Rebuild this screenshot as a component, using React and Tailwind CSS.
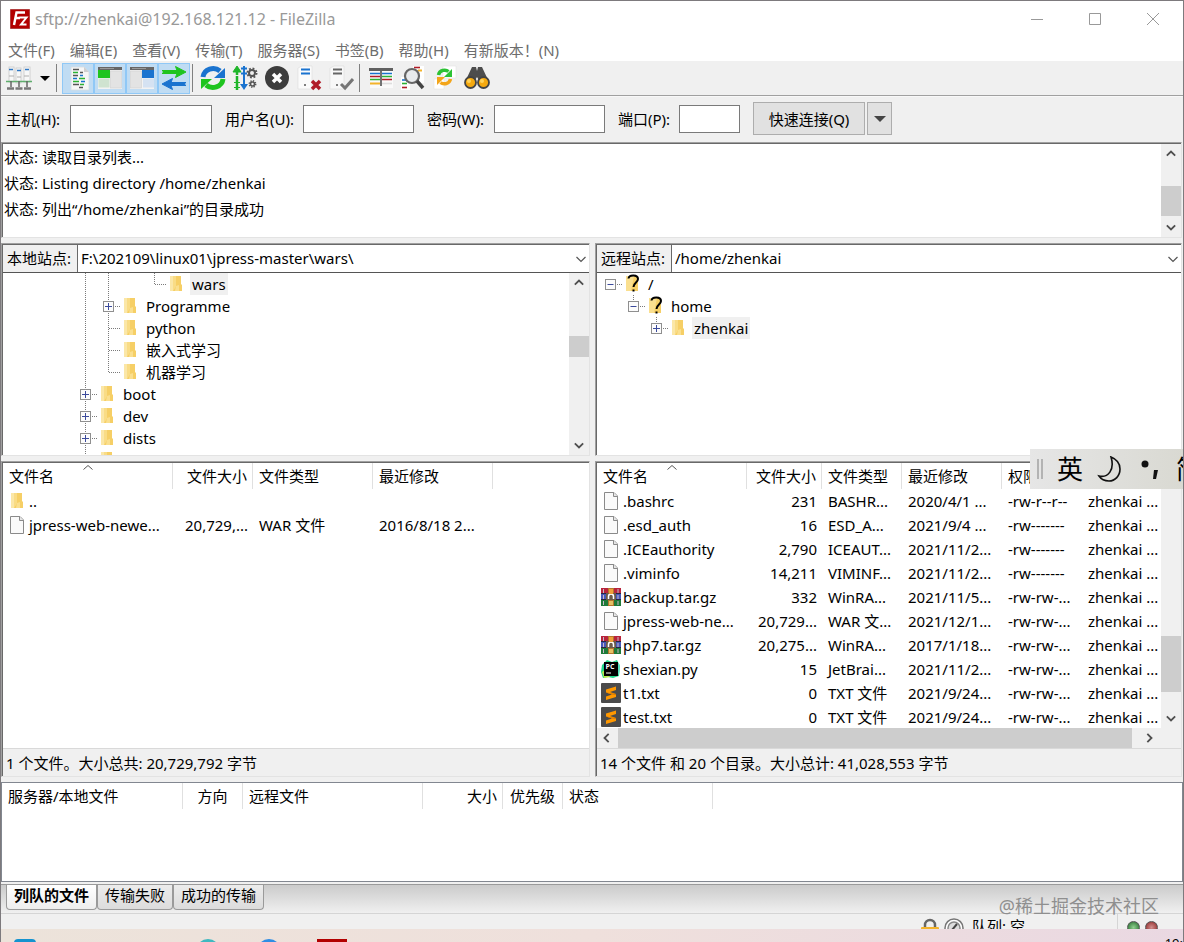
import React, { useState } from 'react';
import clsx from 'clsx';

const MENUS = ['文件(F)', '编辑(E)', '查看(V)', '传输(T)', '服务器(S)', '书签(B)', '帮助(H)', '有新版本！(N)'];

const LOG = ['读取目录列表...', 'Listing directory /home/zhenkai', '列出“/home/zhenkai”的目录成功'];

// guides: one entry per tree level, drawn left to right
const LOCAL_TREE = [
  { name: 'wars', guides: ['line', 'line', 'none', 'end'], selected: true },
  { name: 'Programme', guides: ['line', 'plus'] },
  { name: 'python', guides: ['line', 'branch'] },
  { name: '嵌入式学习', guides: ['line', 'branch'] },
  { name: '机器学习', guides: ['line', 'end'] },
  { name: 'boot', guides: ['plus'] },
  { name: 'dev', guides: ['plus'] },
  { name: 'dists', guides: ['plus'] },
  { name: '', guides: ['line'] },
];

const REMOTE_TREE = [
  { name: '/', guides: ['root'], unknown: true },
  { name: 'home', guides: ['none', 'minus'], unknown: true },
  { name: 'zhenkai', guides: ['none', 'none', 'plusEnd'], selected: true },
];

const LOCAL_FILES = [
  { icon: 'folder', name: '..', size: '', type: '', date: '' },
  { icon: 'file', name: 'jpress-web-newe...', size: '20,729,...', type: 'WAR 文件', date: '2016/8/18 2...' },
];

const REMOTE_FILES = [
  { icon: 'file', name: '.bashrc', size: '231', type: 'BASHR...', date: '2020/4/1 ...', perm: '-rw-r--r--' },
  { icon: 'file', name: '.esd_auth', size: '16', type: 'ESD_A...', date: '2021/9/4 ...', perm: '-rw-------' },
  { icon: 'file', name: '.ICEauthority', size: '2,790', type: 'ICEAUT...', date: '2021/11/2...', perm: '-rw-------' },
  { icon: 'file', name: '.viminfo', size: '14,211', type: 'VIMINF...', date: '2021/11/2...', perm: '-rw-------' },
  { icon: 'rar', name: 'backup.tar.gz', size: '332', type: 'WinRA...', date: '2021/11/5...', perm: '-rw-rw-...' },
  { icon: 'file', name: 'jpress-web-ne...', size: '20,729...', type: 'WAR 文...', date: '2021/12/1...', perm: '-rw-rw-...' },
  { icon: 'rar', name: 'php7.tar.gz', size: '20,275...', type: 'WinRA...', date: '2017/1/18...', perm: '-rw-rw-...' },
  { icon: 'pycharm', name: 'shexian.py', size: '15', type: 'JetBrai...', date: '2021/11/2...', perm: '-rw-rw-...' },
  { icon: 'sublime', name: 't1.txt', size: '0', type: 'TXT 文件', date: '2021/9/24...', perm: '-rw-rw-...' },
  { icon: 'sublime', name: 'test.txt', size: '0', type: 'TXT 文件', date: '2021/9/24...', perm: '-rw-rw-...' },
];

const TABS = ['列队的文件', '传输失败', '成功的传输'];

/* ---------- small icons ---------- */

function Chevron({ dir }) {
  const d = {
    up: 'M1 8 L6 3 L11 8',
    down: 'M1 4 L6 9 L11 4',
    left: 'M8 1 L3 6 L8 11',
    right: 'M4 1 L9 6 L4 11',
  }[dir];
  return (
    <svg viewBox="0 0 12 12" className="w-2.5 h-2.5 shrink-0" fill="none" stroke="#505050" strokeWidth="2.200">
      <path d={d} />
    </svg>
  );
}

function ThinChevron() {
  return (
    <svg viewBox="0 0 12 12" className="w-3 h-3" fill="none" stroke="#555" strokeWidth="1.200">
      <path d="M1.500 4 L6 8.500 L10.500 4" />
    </svg>
  );
}

function FolderIcon() {
  return (
    <svg viewBox="0 0 13 18" className="w-[13px] h-[18px] shrink-0">
      <path d="M0 1h8v11l-3 4H0z" fill="#f9dc86" />
      <path d="M0 1h3v15H0z" fill="#fbe7a8" />
      <path d="M8 1h3v8l1 1v6H3l3-4.500V1z" fill="#f6cf66" />
      <path d="M6 11l3-1v6H5z" fill="#fadf8f" />
    </svg>
  );
}

function UnknownFolderIcon() {
  return (
    <svg viewBox="0 0 13 20" className="w-[13px] h-5 shrink-0 overflow-visible">
      <path d="M0 2h12v15H0z" fill="#fadf8f" />
      <path d="M8 2h4v15H5z" fill="#f6cf66" />
      <path d="M2.500 4.500C3 0.500 12 0.500 12 5c0 3.500-4.500 3.500-4.500 8" fill="none" stroke="#000" strokeWidth="2" />
      <rect x="6.500" y="15.500" width="2" height="2" fill="#000" />
    </svg>
  );
}

function FileIcon() {
  return (
    <svg viewBox="0 0 16 20" className="w-4 h-5">
      <path d="M1.500 1.500h9.500l3.500 3.500v13.500h-13z" fill="#fafafa" stroke="#8a8a8a" />
      <path d="M10.500 1.500v4h4" fill="#e6e6e6" stroke="#8a8a8a" />
    </svg>
  );
}

function RarIcon() {
  return (
    <svg viewBox="0 0 20 20" className="w-5 h-5">
      <rect y="1" width="20" height="6" fill="#b8243c" />
      <rect y="7" width="20" height="6" fill="#4658b8" />
      <rect y="13" width="20" height="6" fill="#1f7a3a" />
      <path d="M0 6.500h20M0 12.500h20" stroke="#2a2440" />
      <path d="M2.500 2v4M2.500 8v4M2.500 14v4M17 2v4M17 8v4M17 14v4" stroke="#c9b7c8" />
      <rect x="7" y="1" width="6" height="18" fill="#b5762f" />
      <rect x="5" y="6" width="10" height="7" fill="#6b5a4a" />
      <path d="M7.500 12V9.500a2.500 2.500 0 0 1 5 0V12" fill="none" stroke="#fff" strokeWidth="1.500" />
      <rect x="8" y="2" width="4" height="5" fill="#f0a03a" />
      <rect x="8" y="14" width="4" height="4" fill="#e6c065" />
    </svg>
  );
}

function PyCharmIcon() {
  return (
    <svg viewBox="0 0 20 20" className="w-5 h-5">
      <path d="M1 6l5-5 5 2 5-2 3 6-1 10-6 2-5-1-5 1-2-6z" fill="#21d789" />
      <path d="M14 2l5 4-1 9-3 3z" fill="#57e0c0" />
      <path d="M1 13l4-3 4 8-6 1z" fill="#b9ec4f" />
      <rect x="3" y="3" width="14" height="14" fill="#000" />
      <text x="4.500" y="9.500" fontSize="7" fontWeight="700" fill="#fff" fontFamily="Open Sans, sans-serif">PC</text>
      <rect x="5" y="13.500" width="5" height="1" fill="#fff" />
    </svg>
  );
}

function SublimeIcon() {
  return (
    <svg viewBox="0 0 20 20" className="w-5 h-5">
      <rect width="20" height="20" rx="1" fill="#4b4b4b" />
      <path d="M5 6.500L15 3.500v3.500L9 9l6 2v3L5 17v-3.500l6-2L5 9.500z" fill="#ff9800" />
      <path d="M5 9.500l10 1.500v1l-4-0.500z" fill="#d97a00" />
    </svg>
  );
}

const FILE_ICONS = { folder: FolderIcon, file: FileIcon, rar: RarIcon, pycharm: PyCharmIcon, sublime: SublimeIcon };

function FileZillaLogo() {
  return (
    <svg viewBox="0 0 20 20" className="w-5 h-5 shrink-0">
      <rect x="0.500" y="0.500" width="19" height="19" fill="#b30000" stroke="#8d0000" strokeDasharray="1 1" />
      <path d="M4 16L6.500 3.500H15M5.500 9H10" fill="none" stroke="#fff" strokeWidth="2.400" />
      <path d="M9.500 8.500h7L11 15.500h5.500" fill="none" stroke="#fff" strokeWidth="2" />
    </svg>
  );
}

/* ---------- toolbar icons, 26px box ---------- */

const TOOL_ICONS = {
  sites: (
    <>
      <g fill="#f8f8f8" stroke="#c8c8c8" strokeWidth="0.800">
        <rect x="3" y="2" width="5" height="15" />
        <rect x="10" y="3" width="5" height="15" />
        <rect x="18" y="2" width="6" height="15" />
      </g>
      <path d="M3 4.500h4M11 5.500h4M19 4.500h4" stroke="#2f77c4" strokeWidth="1.500" />
      <path d="M3 11h5M11 12h4M18 11h5" stroke="#b0b0b0" />
      <path d="M0 16.500h26" stroke="#5fae6d" strokeWidth="1.500" />
      <path d="M5 16v6M13 16v6M21 16v6" stroke="#666" strokeWidth="1.500" />
      <path d="M1 23.500h24" stroke="#777" strokeWidth="2.500" strokeDasharray="7 1.500" />
    </>
  ),
  log: (
    <g transform="translate(2 0)">
      <path d="M4 2h13l5 5v18H4z" fill="#f6f6f6" stroke="#d5dde2" strokeWidth="0.800" />
      <path d="M17 2v5h5z" fill="#cfcfcf" />
      <path d="M6 4.500h6M6 10.500h5M13 7.500h3M6 19.500h6M12 22.500h4" stroke="#555" strokeWidth="1.600" />
      <path d="M13 10.500h3M6 13.500h4M14 16.500h4" stroke="#1874cd" strokeWidth="1.600" />
      <path d="M6 7.500h5M12 13.500h6M6 16.500h6M13 19.500h4" stroke="#2cb234" strokeWidth="1.600" />
    </g>
  ),
  localTree: (
    <>
      <rect x="1" y="3" width="24" height="21" fill="#f3f3f3" />
      <rect x="1" y="2" width="24" height="3" fill="#666" />
      <path d="M3 3.500h14" stroke="#999" />
      <rect x="1" y="5" width="12" height="8" fill="#1fc41f" />
      <rect x="1.500" y="13.500" width="11" height="9" fill="#cfe3d0" />
      <rect x="13.500" y="6" width="11" height="17" fill="#e3e3e3" stroke="#d0d0d0" strokeWidth="0.600" />
    </>
  ),
  remoteTree: (
    <>
      <rect x="1" y="3" width="24" height="21" fill="#f3f3f3" />
      <rect x="1" y="2" width="24" height="3" fill="#666" />
      <path d="M3 3.500h14" stroke="#999" />
      <rect x="1.500" y="6" width="11" height="17" fill="#e3e3e3" stroke="#d0d0d0" strokeWidth="0.600" />
      <rect x="13" y="5" width="12" height="8" fill="#1a73cf" />
      <rect x="14" y="13.500" width="11" height="9" fill="#d5e2f2" />
    </>
  ),
  queue: (
    <>
      <path d="M1 5.500h15l-1.500-4L25 7l-10.500 5.500 1.500-4H1L3 7z" fill="#1fc41f" stroke="#1fc41f" />
      <path d="M25 17.500H10l1.500-4L1 19l10.500 5.500-1.500-4h15L23 19z" fill="#1a73cf" stroke="#1a73cf" />
    </>
  ),
  refresh: (
    <>
      <path d="M3 12C4 4 14 1 20 6" fill="none" stroke="#1a73cf" strokeWidth="5" />
      <path d="M25 3v10H14z" fill="#1a73cf" />
      <path d="M23 14c-1 8-11 11-17 6" fill="none" stroke="#1fc41f" strokeWidth="5" />
      <path d="M1 24V14h11z" fill="#1fc41f" />
    </>
  ),
  process: (
    <>
      <path d="M5 25V4" stroke="#1fb52a" strokeWidth="2.500" strokeDasharray="14 1" />
      <path d="M1 7l4-6 4 6zM2 17.500h6M2 22.500h6" fill="#1fb52a" stroke="#1fb52a" />
      <path d="M12 1v20M9 3.500h6M9 8.500h6" stroke="#1a73cf" strokeWidth="2" />
      <path d="M8 19l4 6 4-6z" fill="#1a73cf" />
      <circle cx="20" cy="8" r="3" fill="none" stroke="#555" strokeWidth="2" />
      <circle cx="20" cy="8" r="4.500" fill="none" stroke="#555" strokeWidth="2" strokeDasharray="1.800 1.730" />
      <circle cx="20.500" cy="19" r="2" fill="none" stroke="#555" strokeWidth="1.600" />
      <circle cx="20.500" cy="19" r="3.200" fill="none" stroke="#555" strokeWidth="1.500" strokeDasharray="1.300 1.210" />
    </>
  ),
  cancel: (
    <>
      <circle cx="13" cy="13" r="12" fill="#3d3d3d" />
      <path d="M9 9l8 8M17 9l-8 8" stroke="#fff" strokeWidth="3.500" />
    </>
  ),
  disconnect: (
    <>
      <path d="M2 3l4-2h10v23H2z" fill="#fbfbfb" stroke="#dcdcdc" strokeWidth="0.600" />
      <path d="M5 4.500h9M5 8.500h9" stroke="#1a73cf" strokeWidth="1.800" />
      <circle cx="9" cy="20" r="1" fill="#555" />
      <path d="M16 16l8 8M24 16l-8 8" stroke="#b01c28" strokeWidth="3.500" />
    </>
  ),
  reconnect: (
    <>
      <path d="M2 3l4-2h10v23H2z" fill="#f8f8f8" stroke="#dcdcdc" strokeWidth="0.600" />
      <path d="M5 4.500h9M5 8.500h9" stroke="#666" strokeWidth="1.800" />
      <circle cx="9" cy="20" r="1" fill="#555" />
      <path d="M13 19l4 4 8-9" fill="none" stroke="#757575" strokeWidth="3" />
    </>
  ),
  filter: (
    <>
      <rect x="2" y="3" width="23" height="20" fill="#fafafa" />
      <rect x="1" y="3" width="24" height="3" fill="#606060" />
      <path d="M2 8.500h10M14 8.500h10" stroke="#1a73cf" strokeWidth="1.600" />
      <path d="M2 11.500h10M14 14.500h10" stroke="#b01c28" strokeWidth="1.600" />
      <path d="M2 14.500h10M14 11.500h10" stroke="#2cb234" strokeWidth="1.600" />
      <path d="M2 18.500h10" stroke="#f3b32a" strokeWidth="2" />
      <path d="M14 18.500h10" stroke="#ddd" strokeWidth="1.600" />
      <path d="M13 6v15" stroke="#505050" strokeWidth="1.600" />
    </>
  ),
  compare: (
    <>
      <path d="M13 1h11v17H13zM1 12h9v13H1z" fill="#fff" />
      <path d="M14 2.500h6" stroke="#b01c28" strokeWidth="1.600" />
      <path d="M18 5.500h4" stroke="#f3b32a" strokeWidth="2" />
      <path d="M2 15h4" stroke="#1a73cf" strokeWidth="1.600" />
      <path d="M2 18.500h5" stroke="#2cb234" strokeWidth="1.600" />
      <path d="M2 22.500h5" stroke="#b01c28" strokeWidth="1.600" />
      <circle cx="12" cy="11" r="7" fill="#e8eaec" stroke="#666" strokeWidth="2.200" />
      <path d="M17 16l6 7" stroke="#444" strokeWidth="3.500" />
    </>
  ),
  sync: (
    <>
      <path d="M11 1h13v12H11zM2 14h10v10H2z" fill="#fff" stroke="#e4e4e4" strokeWidth="0.600" />
      <path d="M6.500 10c1-5 7-6 10-3.500" fill="none" stroke="#2cc234" strokeWidth="3.500" />
      <path d="M20 4v8h-8z" fill="#2cc234" />
      <path d="M18.500 14c-1 5-7 6-10 3.500" fill="none" stroke="#f3a51a" strokeWidth="3.500" />
      <path d="M5 20v-8h8z" fill="#f3a51a" />
    </>
  ),
  find: (
    <>
      <path d="M8 2h4l1 4 1-4h4l7 15h-9l-3-5-3 5H1z" fill="#4d4d4d" />
      <circle cx="6.500" cy="17.500" r="5.500" fill="#f5a90f" stroke="#444" strokeWidth="1.800" />
      <circle cx="19.500" cy="17.500" r="5.500" fill="#f5a90f" stroke="#444" strokeWidth="1.800" />
      <circle cx="5" cy="16" r="2" fill="#ffd35c" />
      <circle cx="18" cy="16" r="2" fill="#ffd35c" />
    </>
  ),
};

function ToolButton({ icon, label, pressed }) {
  return (
    <button
      type="button"
      aria-label={label}
      className={clsx(
        'w-8 h-[31px] flex items-center justify-center',
        pressed && 'bg-[#c0dcf3] border border-[#90c8f6]'
      )}
    >
      <svg viewBox="0 0 26 26" className="w-[26px] h-[26px] shrink-0">{TOOL_ICONS[icon]}</svg>
    </button>
  );
}

function ToolSeparator() {
  return <div className="w-px h-7 bg-[#808080] mx-0.5" />;
}

/* ---------- scrollbars ---------- */

function VScroll({ before, thumb, after }) {
  return (
    <div className="w-5 shrink-0 bg-[#f0f0f0] flex flex-col items-center py-[5px]">
      <Chevron dir="up" />
      <div className="w-full flex-1 flex flex-col py-1">
        <div style={{ flexGrow: before }} />
        <div className="bg-[#cdcdcd]" style={{ flexGrow: thumb }} />
        <div style={{ flexGrow: after }} />
      </div>
      <Chevron dir="down" />
    </div>
  );
}

/* ---------- trees ---------- */

function Guide({ kind }) {
  const box = ['plus', 'minus', 'plusEnd', 'root'].includes(kind);
  const minus = kind === 'minus' || kind === 'root';
  return (
    <svg viewBox="0 0 23 22" className="w-[23px] h-[22px] shrink-0" fill="none">
      <g stroke="#7a7a7a" strokeDasharray="1 1">
        {['line', 'branch', 'plus'].includes(kind) && <path d="M11.500 0v22" />}
        {['end', 'minus', 'plusEnd'].includes(kind) && <path d="M11.500 0v11" />}
        {['branch', 'end'].includes(kind) && <path d="M12 11.500h12" />}
        {box && <path d="M18 11.500h5" />}
      </g>
      {box && (
        <>
          <rect x="6.500" y="6.500" width="10" height="10" fill="#fcfcfc" stroke="#8f8f8f" />
          <path d={minus ? 'M8.500 11.500h6' : 'M8 11.500h7M11.500 8v7'} stroke="#3b4a9c" />
        </>
      )}
    </svg>
  );
}

function Tree({ nodes, className }) {
  return (
    <ul className={clsx('flex-1 min-w-0 overflow-hidden', className)}>
      {nodes.map((n, i) => (
        <li key={i} className="flex items-center h-[22px]">
          {n.guides.map((g, j) => <Guide key={j} kind={g} />)}
          <span className="pl-1 pr-[7px] flex">{n.unknown ? <UnknownFolderIcon /> : <FolderIcon />}</span>
          <span className={clsx('px-0.5 leading-[22px] whitespace-nowrap', n.selected && 'bg-[#f0f0f0]')}>{n.name}</span>
        </li>
      ))}
    </ul>
  );
}

function SitePane({ id, label, path, className, children }) {
  return (
    <div className={clsx('grow min-w-0 border border-[#a0a0a0] border-r-[#e3e3e3] border-b-[#e3e3e3] bg-white', className)}>
      <div className="h-full border-l border-t border-[#696969] flex flex-col">
        <div className="flex h-7 shrink-0 border-b border-[#555]">
          <label htmlFor={id} className="w-[75px] shrink-0 bg-[#f0f0f0] border-r border-[#696969] pl-1 leading-[26px] whitespace-nowrap">
            {label}
          </label>
          <div className="relative flex-1 min-w-0">
            <select id={id} className="appearance-none w-full h-full bg-white pl-[3px] pr-6 pb-0.5 outline-none">
              <option>{path}</option>
            </select>
            <span className="absolute right-0.5 top-2 pointer-events-none"><ThinChevron /></span>
          </div>
        </div>
        <div className="flex flex-1 min-h-0">{children}</div>
      </div>
    </div>
  );
}

/* ---------- file lists ---------- */

function HeaderCell({ children, className, sorted }) {
  return (
    <th className={clsx('relative font-normal h-[26px] p-0 leading-[26px] border-r border-[#e0e0e0] whitespace-nowrap', className)}>
      {children}
      {sorted && (
        <svg viewBox="0 0 10 5" className="absolute top-0.5 left-1/2 -translate-x-1/2 w-2.5 h-[5px]" fill="none" stroke="#555">
          <path d="M0.500 4.500L5 0.500L9.500 4.500" />
        </svg>
      )}
    </th>
  );
}

function FileTable({ files, remote }) {
  const cell = 'p-0 pl-1.5 whitespace-nowrap overflow-hidden';
  return (
    <table className={clsx('table-fixed border-separate border-spacing-0', remote ? 'w-[570px]' : 'w-[490px]')}>
      <colgroup>
        <col className={remote ? 'w-[150px]' : 'w-[170px]'} />
        <col className={remote ? 'w-[75px]' : 'w-[80px]'} />
        <col className={remote ? 'w-[80px]' : 'w-[120px]'} />
        <col className={remote ? 'w-[100px]' : 'w-[120px]'} />
        {remote && <col className="w-[80px]" />}
        {remote && <col className="w-[85px]" />}
      </colgroup>
      <thead>
        <tr>
          <HeaderCell className="text-left pl-1.5" sorted>文件名</HeaderCell>
          <HeaderCell className="text-right pr-[5px]">文件大小</HeaderCell>
          <HeaderCell className="text-left pl-1.5">文件类型</HeaderCell>
          <HeaderCell className="text-left pl-1.5">最近修改</HeaderCell>
          {remote && <HeaderCell className="text-left pl-1.5">权限</HeaderCell>}
          {remote && <HeaderCell className="text-left pl-1.5">所有者/组</HeaderCell>}
        </tr>
      </thead>
      <tbody>
        {files.map((f) => {
          const Icon = FILE_ICONS[f.icon];
          return (
            <tr key={f.name} className="h-6 leading-6">
              <td className="p-0 pl-1">
                <div className="flex items-center gap-0.5 h-6 whitespace-nowrap">
                  <span className="w-5 flex justify-center shrink-0"><Icon /></span>
                  {f.name}
                </div>
              </td>
              <td className="p-0 pr-[5px] text-right whitespace-nowrap">{f.size}</td>
              <td className={cell}>{f.type}</td>
              <td className={cell}>{f.date}</td>
              {remote && <td className={cell}>{f.perm}</td>}
              {remote && <td className={cell}>zhenkai ...</td>}
            </tr>
          );
        })}
      </tbody>
    </table>
  );
}

function ListPane({ status, className, children }) {
  return (
    <div className={clsx('grow min-w-0 border border-[#a0a0a0] border-r-[#e3e3e3] border-b-[#e3e3e3] bg-white', className)}>
      <div className="h-full border-l border-t border-[#696969] flex flex-col">
        <div className="flex-1 min-h-0 flex flex-col overflow-hidden">{children}</div>
        <div className="h-7 shrink-0 bg-[#f0f0f0] border-t border-[#d9d9d9] pl-[3px] leading-[29px] whitespace-nowrap">{status}</div>
      </div>
    </div>
  );
}

function QuickField({ id, label, labelWidth, width }) {
  return (
    <div className="flex items-center mr-[13px]">
      <label htmlFor={id} className={clsx('whitespace-nowrap', labelWidth)}>{label}</label>
      <input id={id} type="text" className={clsx('h-7 bg-white border border-[#7a7a7a] px-1 outline-none', width)} />
    </div>
  );
}

export default function App() {
  const [tab, setTab] = useState(0);

  return (
    <div className="relative h-screen overflow-hidden flex flex-col bg-[#f0f0f0] border-t border-l border-r border-[#7d7a7d] text-[15px] leading-5 text-black font-['Noto_Sans','Noto_Sans_CJK_SC',sans-serif]">
      {/* Title bar */}
      <header className="h-[37px] shrink-0 bg-white flex items-center pl-[9px] pr-px pb-0.5 text-[#999]">
        <FileZillaLogo />
        <h1 className="flex-1 pl-[5px] text-base leading-6 whitespace-nowrap">sftp://zhenkai@192.168.121.12 - FileZilla</h1>
        <div className="flex">
          <button type="button" aria-label="最小化" className="w-[58px] h-9 flex items-center justify-center">
            <svg viewBox="0 0 12 12" className="w-3 h-3" stroke="#999"><path d="M0 6.500h12" /></svg>
          </button>
          <button type="button" aria-label="最大化" className="w-[58px] h-9 flex items-center justify-center">
            <svg viewBox="0 0 12 12" className="w-3 h-3" stroke="#999" fill="none"><path d="M0.500 0.500h11v11h-11z" /></svg>
          </button>
          <button type="button" aria-label="关闭" className="w-[58px] h-9 flex items-center justify-center">
            <svg viewBox="0 0 12 12" className="w-3 h-3" stroke="#999"><path d="M0 0l12 12M12 0L0 12" /></svg>
          </button>
        </div>
      </header>

      {/* Menu */}
      <nav className="h-[23px] shrink-0 bg-white flex items-center gap-[15px] pl-[7px] text-[#6d6d6d]">
        {MENUS.map((m) => (
          <button key={m} type="button" className="whitespace-nowrap">{m}</button>
        ))}
      </nav>

      {/* Toolbar */}
      <div className="h-[35px] shrink-0 flex items-center pl-0.5 border-b border-[#a0a0a0]">
        <ToolButton icon="sites" label="站点管理器" />
        <button type="button" aria-label="站点列表" className="w-[19px] h-7 flex items-center justify-center">
          <svg viewBox="0 0 10 5" className="w-2.5 h-[5px]"><path d="M0 0h10L5 5z" /></svg>
        </button>
        <ToolSeparator />
        <div className="flex pl-[3px]">
          <ToolButton icon="log" label="消息日志" pressed />
          <ToolButton icon="localTree" label="本地目录树" pressed />
          <ToolButton icon="remoteTree" label="远程目录树" pressed />
          <ToolButton icon="queue" label="传输队列" pressed />
        </div>
        <ToolSeparator />
        <div className="flex pl-0.5">
          <ToolButton icon="refresh" label="刷新" />
          <ToolButton icon="process" label="处理队列" />
          <ToolButton icon="cancel" label="取消" />
          <ToolButton icon="disconnect" label="断开" />
          <ToolButton icon="reconnect" label="重新连接" />
        </div>
        <ToolSeparator />
        <div className="flex pl-[3px]">
          <ToolButton icon="filter" label="过滤器" />
          <ToolButton icon="compare" label="目录对比" />
          <ToolButton icon="sync" label="同步浏览" />
          <ToolButton icon="find" label="查找" />
        </div>
      </div>

      {/* Quick connect */}
      <form onSubmit={(e) => e.preventDefault()} className="h-[46px] shrink-0 flex items-center pl-[5px] pb-0.5 border-t border-[#f8f8f8]">
        <QuickField id="host" label="主机(H):" labelWidth="w-16" width="w-[142px]" />
        <QuickField id="user" label="用户名(U):" labelWidth="w-[78px]" width="w-[111px]" />
        <QuickField id="pass" label="密码(W):" labelWidth="w-[67px]" width="w-[111px]" />
        <QuickField id="port" label="端口(P):" labelWidth="w-[61px]" width="w-[61px]" />
        <div className="flex gap-0.5">
          <button type="submit" className="w-[112px] h-[33px] bg-[#e1e1e1] border border-[#adadad] whitespace-nowrap">快速连接(Q)</button>
          <button type="button" aria-label="历史" className="w-[25px] h-[33px] bg-[#e1e1e1] border border-[#adadad] flex items-center justify-center">
            <svg viewBox="0 0 12 6" className="w-3 h-1.5" fill="#444"><path d="M0 0h12L6 6z" /></svg>
          </button>
        </div>
      </form>

      {/* Message log */}
      <section className="shrink-0 mr-px border border-[#a0a0a0] border-r-[#e3e3e3] border-b-[#e3e3e3] bg-white">
        <div className="border-l border-t border-[#696969] flex">
          <div className="flex-1 pl-px pb-[15px] overflow-hidden">
            {LOG.map((line) => (
              <p key={line} className="leading-[26px] whitespace-nowrap">状态: {line}</p>
            ))}
          </div>
          <VScroll before={23} thumb={30} after={2} />
        </div>
      </section>

      {/* Directory trees */}
      <div className="h-[213px] shrink-0 mt-[5px] mr-px flex gap-[5px]">
        <SitePane id="local" label="本地站点:" path="F:\202109\linux01\jpress-master\wars\" className="basis-1">
          <Tree nodes={LOCAL_TREE} className="pl-[71px]" />
          <VScroll before={44} thumb={21} after={79} />
        </SitePane>
        <SitePane id="remote" label="远程站点:" path="/home/zhenkai" className="basis-0">
          <Tree nodes={REMOTE_TREE} className="pl-0.5" />
        </SitePane>
      </div>

      {/* File lists */}
      <div className="flex-1 min-h-0 mt-[5px] mr-px flex gap-[5px]">
        <ListPane status="1 个文件。大小总共: 20,729,792 字节" className="basis-1">
          <FileTable files={LOCAL_FILES} />
        </ListPane>
        <ListPane status="14 个文件 和 20 个目录。大小总计: 41,028,553 字节" className="basis-0">
          <div className="flex-1 min-h-0 flex">
            <div className="flex-1 min-w-0 overflow-hidden">
              <FileTable files={REMOTE_FILES} remote />
            </div>
            <VScroll before={154} thumb={56} after={17} />
          </div>
          <div className="h-5 shrink-0 bg-[#f0f0f0] flex items-center pl-[5px] pr-[27px]">
            <Chevron dir="left" />
            <div className="flex-1 h-full bg-[#cdcdcd] ml-1.5 mr-3" />
            <Chevron dir="right" />
          </div>
        </ListPane>
      </div>

      {/* Transfer queue */}
      <section className="h-[100px] shrink-0 mt-[5px] bg-white border border-[#828790]">
        <table className="table-fixed w-[711px] border-separate border-spacing-0">
          <colgroup>
            <col className="w-[181px]" />
            <col className="w-[60px]" />
            <col className="w-[180px]" />
            <col className="w-[80px]" />
            <col className="w-[60px]" />
            <col className="w-[150px]" />
          </colgroup>
          <thead>
            <tr>
              <HeaderCell className="text-left pl-1.5">服务器/本地文件</HeaderCell>
              <HeaderCell className="text-center">方向</HeaderCell>
              <HeaderCell className="text-left pl-1.5">远程文件</HeaderCell>
              <HeaderCell className="text-right pr-[5px]">大小</HeaderCell>
              <HeaderCell className="text-center">优先级</HeaderCell>
              <HeaderCell className="text-left pl-1.5">状态</HeaderCell>
            </tr>
          </thead>
        </table>
      </section>

      {/* Queue tabs */}
      <div className="h-8 shrink-0 pt-0.5 border-b border-[#d5d5d5]">
        <div role="tablist" className="h-full flex items-start pl-[5px] border-t border-[#9a9a9a] bg-linear-to-b from-[#cbcbcb] to-[#f0f0f0]">
          {TABS.map((t, i) => (
            <button
              key={t}
              type="button"
              role="tab"
              aria-selected={tab === i}
              onClick={() => setTab(i)}
              className={clsx(
                'h-[25px] px-[7px] pb-1 leading-5 whitespace-nowrap border border-t-0 border-[#9a9a9a] rounded-b-sm',
                tab === i ? 'bg-linear-to-b from-white to-[#eee] font-bold' : 'bg-linear-to-b from-[#ececec] to-[#dcdcdc]'
              )}
            >
              {t}
            </button>
          ))}
        </div>
      </div>

      {/* Status bar, partly behind the taskbar */}
      <footer className="h-[15px] shrink-0 overflow-hidden flex justify-end items-start">
        <div className="h-6 flex items-center pr-[25px]">
          <svg viewBox="0 0 20 20" className="w-5 h-5 mt-1">
            <path d="M5 11V7a5 5 0 0 1 10 0v4" fill="none" stroke="#666" strokeWidth="2.500" />
            <rect x="1" y="9" width="18" height="10" rx="1" fill="#f3b32a" />
          </svg>
          <svg viewBox="0 0 20 20" className="w-5 h-5 mt-1 ml-1">
            <circle cx="10" cy="10" r="9" fill="#fff" stroke="#777" strokeWidth="1.500" />
            <circle cx="10" cy="10" r="6" fill="#ddd" stroke="#888" strokeWidth="1.500" />
            <path d="M8 12l5-6" stroke="#444" strokeWidth="2" />
          </svg>
          <span className="w-[145px] ml-2 leading-6">队列: 空</span>
          <span className="w-px h-6 bg-[#d5d5d5] mr-[9px]" />
          <span className="w-[13px] h-[13px] rounded-full bg-radial from-[#8fd18f] to-[#1f6b2c] border border-[#555] mt-[2px]" />
          <span className="w-[13px] h-[13px] rounded-full bg-radial from-[#d18f8f] to-[#8a1f24] border border-[#555] mt-[2px] ml-[5px]" />
        </div>
      </footer>

      {/* Desktop taskbar */}
      <div className="h-[13px] shrink-0 overflow-hidden flex items-start bg-linear-to-r from-[#ece3da] via-[#efe0dc] to-[#ead8e2] pl-[13px] pt-2.5">
        <span className="w-[22px] h-6 shrink-0 rounded-t-sm bg-[#1593cf]" />
        <span className="w-6 h-6 shrink-0 rounded-full bg-[#3fb8c0] ml-[160px]" />
        <span className="w-6 h-6 shrink-0 rounded-full bg-[#2f8de4] ml-[37px]" />
        <span className="w-[30px] h-6 shrink-0 bg-[#b30000] ml-9" />
        <span className="flex-1 text-right text-[13px] leading-4 -mt-1">19:</span>
      </div>

      <p className="absolute right-6 bottom-[22px] text-lg leading-7 text-[#8f8f8f] whitespace-nowrap">@稀土掘金技术社区</p>

      {/* Input method bar */}
      <div className="absolute right-0 top-[448px] w-[153px] h-10 overflow-hidden flex items-center bg-linear-to-r from-[#e6e6e6] to-[#d9d9d2] text-[26px] leading-10 whitespace-nowrap">
        <span className="shrink-0 w-1.5 h-5 ml-[7px] border-l-2 border-r-2 border-[#b3b3b3]" />
        <span className="shrink-0 ml-[14px] w-[27px]">英</span>
        <svg viewBox="0 0 26 26" className="shrink-0 w-[26px] h-[26px] ml-[13px]" fill="none" stroke="#111" strokeWidth="1.600">
          <path d="M14 1c5 2 9 6 9 12 0 7-5 12-11 12-4 0-8-2-10-5 9 2 16-6 12-19z" />
        </svg>
        <svg viewBox="0 0 20 26" className="shrink-0 w-5 h-[26px] ml-[18px]" fill="#111">
          <circle cx="4" cy="8" r="3.500" />
          <path d="M13 14h4l-2 9h-3z" />
        </svg>
        <span className="shrink-0 ml-[15px]">简</span>
      </div>
    </div>
  );
}
